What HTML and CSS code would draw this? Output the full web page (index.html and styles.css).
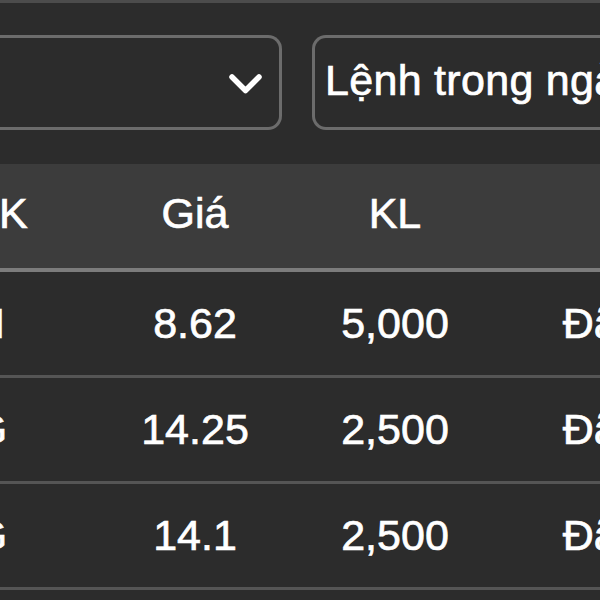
FILE: index.html
```html
<!DOCTYPE html>
<html lang="vi">
<head>
<meta charset="utf-8">
<title>Lệnh trong ngày</title>
<link rel="stylesheet" href="styles.css">
</head>
<body>
<div class="topline"></div>
<div class="filters">
  <div class="select">
    <svg class="chevron" width="35" height="22" viewBox="0 0 35 22"><polyline points="4,4 17.5,17.5 31,4" fill="none" stroke="#ffffff" stroke-width="5.5" stroke-linecap="round" stroke-linejoin="round"/></svg>
  </div>
  <div class="input">Lệnh trong ngày</div>
</div>
<div class="table">
  <div class="row head">
    <div class="cell first">Mã CK</div>
    <div class="cell">Giá</div>
    <div class="cell">KL</div>
    <div class="cell">TT</div>
  </div>
  <div class="row">
    <div class="cell sym">VIN</div>
    <div class="cell">8.62</div>
    <div class="cell">5,000</div>
    <div class="cell">Đã khớp</div>
  </div>
  <div class="row">
    <div class="cell sym">DIG</div>
    <div class="cell">14.25</div>
    <div class="cell">2,500</div>
    <div class="cell">Đã khớp</div>
  </div>
  <div class="row">
    <div class="cell sym">DIG</div>
    <div class="cell">14.1</div>
    <div class="cell">2,500</div>
    <div class="cell">Đã khớp</div>
  </div>
</div>
</body>
</html>
```
FILE: styles.css
```css
html, body {
  margin: 0;
  padding: 0;
  background: #2c2c2c;
  overflow: hidden;
}
body {
  font-family: "Liberation Sans", Arial, sans-serif;
  font-size: 43px;
  color: #ffffff;
  -webkit-text-stroke: 0.7px #ffffff;
  width: 600px;
  height: 600px;
}
.topline {
  height: 3px;
  background: #4c4c4c;
}
.filters {
  display: flex;
  gap: 30px;
  padding-top: 32px;
  height: 95px;
  margin-bottom: 34px;
}
.select {
  box-sizing: border-box;
  flex: 0 0 282px;
  height: 95px;
  border: 3px solid #6c6c6c;
  border-left: none;
  border-radius: 0 14px 14px 0;
  display: flex;
  align-items: center;
  justify-content: flex-end;
  padding-right: 16px;
}
.chevron {
  display: block;
  margin-top: 2px;
}
.input {
  box-sizing: border-box;
  flex: 0 0 400px;
  height: 95px;
  border: 3px solid #6c6c6c;
  border-right: none;
  border-radius: 14px 0 0 14px;
  padding-left: 10px;
  display: flex;
  align-items: center;
  white-space: nowrap;
  overflow: hidden;
  padding-bottom: 4px;
  letter-spacing: 0.3px;
}
.table {
  margin-left: -165px;
  width: 960px;
}
.row {
  display: grid;
  grid-template-columns: 260px 200px 200px 300px;
  height: 103px;
  border-bottom: 3px solid #555555;
  align-items: center;
}
.row.head {
  background: #3c3c3c;
  height: 104px;
  border-bottom: 4px solid #7c7c7c;
}
.row.head .cell {
  padding-bottom: 6px;
}
.cell {
  text-align: center;
  white-space: nowrap;
}
.row.head .cell.first {
  padding-right: 6px;
}
.cell.sym {
  padding-left: 8px;
}
```
